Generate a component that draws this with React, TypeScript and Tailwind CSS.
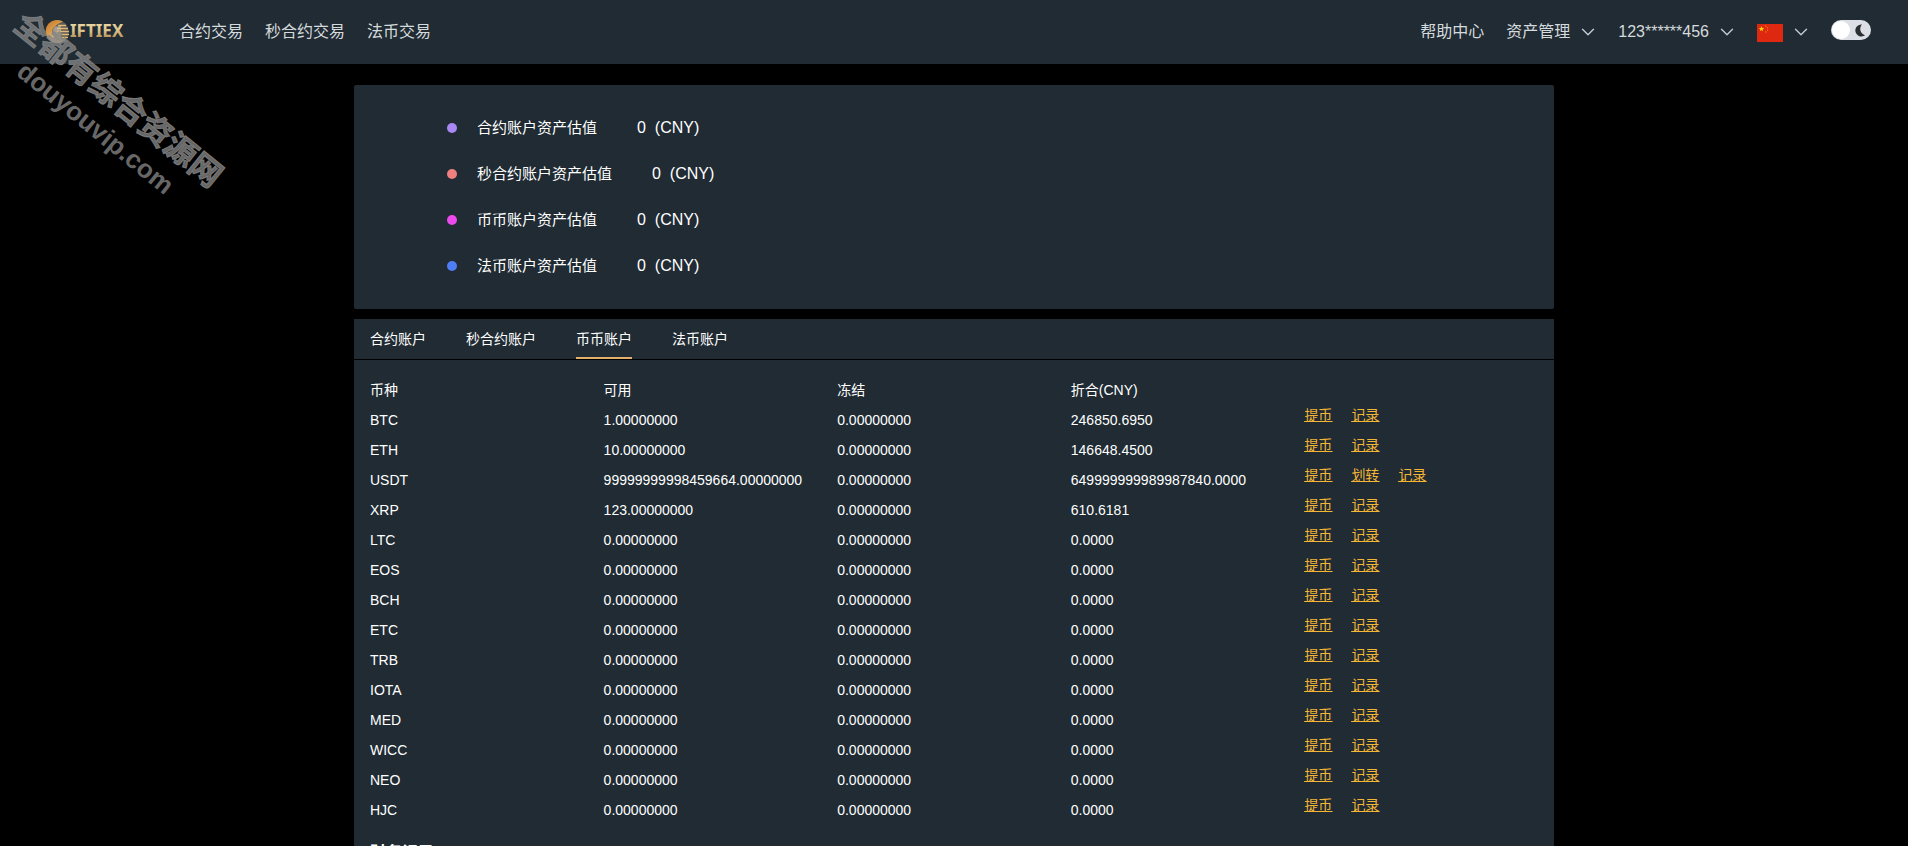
import { ChevronDown } from "lucide-react";
import { useState } from "react";

const navLinks = ["合约交易", "秒合约交易", "法币交易"];

// Valuation of each account type
const valuations = [
  { label: "合约账户资产估值", dot: "bg-[#a987f5]" },
  { label: "秒合约账户资产估值", dot: "bg-[#f08080]" },
  { label: "币币账户资产估值", dot: "bg-[#ec4aec]" },
  { label: "法币账户资产估值", dot: "bg-[#4f7df3]" },
];

const tabs = ["合约账户", "秒合约账户", "币币账户", "法币账户"];

const EMPTY = "0.00000000";

const coins = [
  { name: "BTC", available: "1.00000000", cny: "246850.6950" },
  { name: "ETH", available: "10.00000000", cny: "146648.4500" },
  {
    name: "USDT",
    available: "99999999998459664.00000000",
    cny: "649999999989987840.0000",
    transfer: true,
  },
  { name: "XRP", available: "123.00000000", cny: "610.6181" },
  { name: "LTC", available: EMPTY, cny: "0.0000" },
  { name: "EOS", available: EMPTY, cny: "0.0000" },
  { name: "BCH", available: EMPTY, cny: "0.0000" },
  { name: "ETC", available: EMPTY, cny: "0.0000" },
  { name: "TRB", available: EMPTY, cny: "0.0000" },
  { name: "IOTA", available: EMPTY, cny: "0.0000" },
  { name: "MED", available: EMPTY, cny: "0.0000" },
  { name: "WICC", available: EMPTY, cny: "0.0000" },
  { name: "NEO", available: EMPTY, cny: "0.0000" },
  { name: "HJC", available: EMPTY, cny: "0.0000" },
];

function Logo() {
  return (
    <a href="#" aria-label="GIFTIEX" className="block">
      <svg width="84" height="26" viewBox="0 0 84 26">
        <defs>
          <linearGradient id="gold" x1="0" y1="0" x2="0" y2="1">
            <stop offset="0" stopColor="#f0dfae" />
            <stop offset="0.5" stopColor="#dcc48c" />
            <stop offset="1" stopColor="#a87236" />
          </linearGradient>
          <linearGradient id="coin" x1="0" y1="0" x2="0.6" y2="1">
            <stop offset="0" stopColor="#c9781f" />
            <stop offset="0.5" stopColor="#d99a4c" />
            <stop offset="1" stopColor="#e6c9a0" />
          </linearGradient>
        </defs>
        <circle cx="13" cy="12.5" r="11.5" fill="#5c5a52" />
        <path
          d="M19 2.6A11.5 11.5 0 1 0 19 22.4L17 19.8A7 7 0 0 1 11 7.5Q14 4.6 19 2.6Z"
          fill="url(#coin)"
        />
        <path d="M11 7.5Q6 13 11 20Q15 22 17 19.8V7Z" fill="#a39c90" />
        <path
          d="M14 6.5H22M13 9.5H24M13 12.5H25M13 15.5H25M14 18.5H24M16 21H21"
          stroke="#e3b878"
          strokeWidth="1.5"
        />
        <text
          x="26"
          y="18"
          fill="url(#gold)"
          fontFamily="Noto Sans, Open Sans, sans-serif"
          fontSize="17"
          fontWeight="700"
        >
          IFTIEX
        </text>
      </svg>
    </a>
  );
}

function Flag() {
  return (
    <svg width="26" height="18" viewBox="0 0 26 18" className="mt-0.5">
      <rect width="26" height="18" fill="#de2910" />
      <path
        d="M4.5 2l.7 2h2.1L5.6 5.3l.6 2-1.7-1.2-1.7 1.2.6-2L1.7 4h2.1z"
        fill="#ffde00"
      />
      <g fill="#e8801a">
        <circle cx="8.8" cy="2" r="0.7" />
        <circle cx="10.6" cy="3.8" r="0.7" />
        <circle cx="10.6" cy="6.2" r="0.7" />
        <circle cx="8.8" cy="8" r="0.7" />
      </g>
    </svg>
  );
}

function Chevron() {
  return <ChevronDown size={22} strokeWidth={1.5} className="text-[#c3cbd1]" />;
}

function Watermark() {
  return (
    <div className="pointer-events-none absolute top-[78px] -left-[21px] w-64 rotate-[39deg] text-center font-bold whitespace-nowrap text-[#858585]/80 select-none">
      <p className="text-[32px] leading-9 [-webkit-text-stroke:1px]">全都有综合资源网</p>
      <p className="text-[26px] leading-9">douyouvip.com</p>
    </div>
  );
}

export default function App() {
  const [activeTab, setActiveTab] = useState("币币账户");
  const [dark, setDark] = useState(true);

  return (
    <div className="relative h-screen overflow-hidden bg-black font-['Liberation_Sans','Noto_Sans_CJK_SC',sans-serif] text-white">
      <header className="flex h-16 items-center justify-between bg-[#202b33] pr-[37px] pl-11 text-base text-[#d5dadd]">
        <div className="flex items-center gap-[51px]">
          <Logo />
          <nav className="flex gap-[22px]">
            {navLinks.map((link) => (
              <a key={link} href="#">
                {link}
              </a>
            ))}
          </nav>
        </div>

        <div className="flex items-center">
          <a href="#" className="mr-[22px]">
            帮助中心
          </a>
          <button className="mr-[19px] flex items-center gap-[7px]">
            资产管理
            <Chevron />
          </button>
          <button className="mr-[19px] flex items-center gap-[7px]">
            123******456
            <Chevron />
          </button>
          <button aria-label="中文" className="mr-[19px] flex items-center gap-[7px]">
            <Flag />
            <Chevron />
          </button>
          <button
            role="switch"
            aria-checked={dark}
            aria-label="夜间模式"
            onClick={() => setDark(!dark)}
            className="mb-1 flex h-5 w-10 items-center justify-between rounded-full bg-[#dcdfe6] px-px"
          >
            <span className="size-[18px] rounded-full bg-white" />
            <svg width="16" height="16" viewBox="0 0 16 16">
              <path d="M8 2.5A6 6 0 1 0 11 13.2A6.5 6.5 0 0 1 8 2.5Z" fill="#2b2f33" />
            </svg>
          </button>
        </div>
      </header>

      <main className="mx-auto mt-[21px] max-w-[1200px]">
        <section className="rounded-xs bg-[#202b33] py-5 pl-[93px]">
          <ul>
            {valuations.map((item) => (
              <li key={item.label} className="flex h-[46px] items-center">
                <span className={`size-2.5 rounded-full ${item.dot}`} />
                <span className="ml-5 text-[15px]">{item.label}</span>
                <span className="ml-10 text-base">0 &nbsp;(CNY)</span>
              </li>
            ))}
          </ul>
        </section>

        <section className="mt-2.5 bg-[#202b33] pb-10 text-sm">
          <div role="tablist" className="flex gap-10 border-b border-black px-4">
            {tabs.map((tab) => (
              <button
                key={tab}
                role="tab"
                aria-selected={tab === activeTab}
                onClick={() => setActiveTab(tab)}
                className={`h-10 border-b-2 pt-0.5 ${
                  tab === activeTab ? "border-[#e2b06a]" : "border-transparent"
                }`}
              >
                {tab}
              </button>
            ))}
          </div>

          <div className="px-4 pt-[15px]">
            <table className="w-full table-fixed text-left">
              <thead>
                <tr className="h-[30px]">
                  <th className="font-normal">币种</th>
                  <th className="font-normal">可用</th>
                  <th className="font-normal">冻结</th>
                  <th className="font-normal">折合(CNY)</th>
                  <th aria-label="操作" />
                </tr>
              </thead>
              <tbody>
                {coins.map((coin) => (
                  <tr key={coin.name} className="h-[30px]">
                    <td>{coin.name}</td>
                    <td>{coin.available}</td>
                    <td>{EMPTY}</td>
                    <td>{coin.cny}</td>
                    <td className="align-top text-[#f5b535]">
                      <div className="flex gap-[19px] underline">
                        <a href="#">提币</a>
                        {coin.transfer && <a href="#">划转</a>}
                        <a href="#">记录</a>
                      </div>
                    </td>
                  </tr>
                ))}
              </tbody>
            </table>
            <h2 className="mt-4 text-base font-bold">财务记录</h2>
          </div>
        </section>
      </main>

      <Watermark />
    </div>
  );
}
